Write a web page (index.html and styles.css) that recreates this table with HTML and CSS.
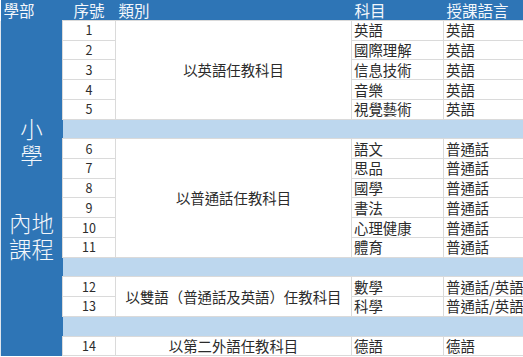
FILE: index.html
```html
<!DOCTYPE html>
<html lang="zh-Hant">
<head>
  <meta charset="UTF-8" />
  <title>小學內地課程</title>
  <link rel="stylesheet" href="styles.css">
</head>
<body>
  <table class="course-table">
    <colgroup>
      <col class="col-dept">
      <col class="col-no">
      <col class="col-cat">
      <col class="col-subj">
      <col class="col-lang">
    </colgroup>
    <thead>
      <tr>
        <th class="left">學部</th>
        <th class="center">序號</th>
        <th class="left">類別</th>
        <th class="left">科目</th>
        <th class="left">授課語言</th>
      </tr>
    </thead>
    <tbody>
      <tr>
        <td class="dept" rowspan="17">
          <div class="dept-line">小</div>
          <div class="dept-line">學</div>
          <div class="dept-line gap">內地</div>
          <div class="dept-line">課程</div>
        </td>
        <td class="no">1</td>
        <td class="cat" rowspan="5">以英語任教科目</td>
        <td>英語</td>
        <td>英語</td>
      </tr>
      <tr><td class="no">2</td><td>國際理解</td><td>英語</td></tr>
      <tr><td class="no">3</td><td>信息技術</td><td>英語</td></tr>
      <tr><td class="no">4</td><td>音樂</td><td>英語</td></tr>
      <tr><td class="no">5</td><td>視覺藝術</td><td>英語</td></tr>
      <tr class="band"><td colspan="4"></td></tr>

      <tr>
        <td class="no">6</td>
        <td class="cat" rowspan="6">以普通話任教科目</td>
        <td>語文</td>
        <td>普通話</td>
      </tr>
      <tr><td class="no">7</td><td>思品</td><td>普通話</td></tr>
      <tr><td class="no">8</td><td>國學</td><td>普通話</td></tr>
      <tr><td class="no">9</td><td>書法</td><td>普通話</td></tr>
      <tr><td class="no">10</td><td>心理健康</td><td>普通話</td></tr>
      <tr><td class="no">11</td><td>體育</td><td>普通話</td></tr>
      <tr class="band"><td colspan="4"></td></tr>

      <tr>
        <td class="no">12</td>
        <td class="cat" rowspan="2">以雙語（普通話及英語）任教科目</td>
        <td>數學</td>
        <td>普通話/英語</td>
      </tr>
      <tr><td class="no">13</td><td>科學</td><td>普通話/英語</td></tr>
      <tr class="band"><td colspan="4"></td></tr>

      <tr>
        <td class="no">14</td>
        <td class="cat">以第二外語任教科目</td>
        <td>德語</td>
        <td>德語</td>
      </tr>
    </tbody>
  </table>
</body>
</html>
```

FILE: styles.css
```css
body {
  margin: 0;
  padding: 0;
  background-color: #ffffff;
  font-family: "Noto Sans CJK TC", "Noto Sans", sans-serif;
}

.course-table {
  width: 523px;
  table-layout: fixed;
  border-collapse: collapse;
  color: #2b2b2b;
  font-size: 14.4px;
}

.col-dept { width: 62px; }
.col-no { width: 53px; }
.col-cat { width: 236px; }
.col-subj { width: 92px; }
.col-lang { width: 80px; }

.course-table th {
  height: 20px;
  padding: 0 3px;
  background-color: #2e75b6;
  color: #f4f7fb;
  font-size: 15.5px;
  font-weight: normal;
  line-height: 20px;
  white-space: nowrap;
}

.course-table th.left { text-align: left; }
.course-table th.center { text-align: center; }

.course-table td {
  height: 18.72px;
  padding: 0 0 0 2px;
  border: 1px solid #dadada;
  line-height: 18px;
  white-space: nowrap;
  vertical-align: middle;
}

.course-table td.no {
  padding: 0;
  text-align: center;
  font-size: 12.5px;
}

.course-table td.cat {
  padding: 0;
  text-align: center;
}

.course-table td.dept {
  padding: 0;
  border: none;
  border-left: 1px solid #dfe6ee;
  background-color: #2e75b6;
  color: #f4f7fb;
  font-size: 22.5px;
  font-weight: 300;
  text-align: center;
}

.dept-line {
  line-height: 26px;
}

.dept-line.gap {
  margin-top: 42px;
}

.band td {
  background-color: #bdd7ee;
  border-left: none;
  border-right: none;
}
```
